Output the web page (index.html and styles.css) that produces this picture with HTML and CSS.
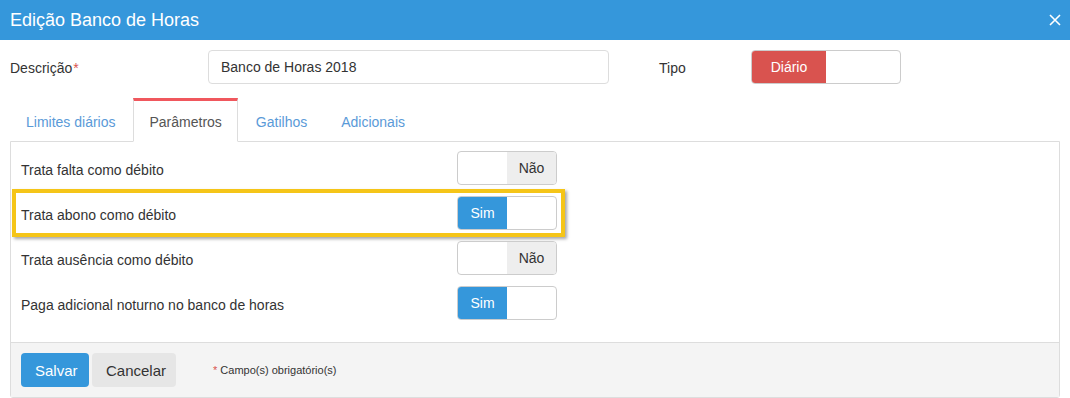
FILE: index.html
```html
<!DOCTYPE html>
<html lang="pt-BR">
<head>
  <meta charset="UTF-8">
  <title>Edição Banco de Horas</title>
  <link rel="stylesheet" href="styles.css">
</head>
<body>
  <div class="modal-header">
    <span class="modal-title">Edição Banco de Horas</span>
    <span class="close">
      <svg width="12" height="12" viewBox="0 0 12 12"><path d="M1 1L11 11M11 1L1 11" stroke="#fff" stroke-width="1.6"/></svg>
    </span>
  </div>

  <div class="form-row">
    <label class="form-label">Descrição<span class="req">*</span></label>
    <input class="form-input" type="text" value="Banco de Horas 2018">
    <label class="tipo-label">Tipo</label>
    <div class="toggle toggle-wide">
      <span class="half on-red">Diário</span>
      <span class="half"></span>
    </div>
  </div>

  <ul class="tabs">
    <li class="tab">Limites diários</li>
    <li class="tab active">Parâmetros</li>
    <li class="tab">Gatilhos</li>
    <li class="tab">Adicionais</li>
  </ul>

  <div class="pane">
    <div class="rows">
      <div class="row">
        <span class="row-label">Trata falta como débito</span>
        <div class="toggle"><span class="half"></span><span class="half off">Não</span></div>
      </div>
      <div class="row highlighted">
        <span class="mark"></span>
        <span class="row-label">Trata abono como débito</span>
        <div class="toggle"><span class="half on">Sim</span><span class="half"></span></div>
      </div>
      <div class="row">
        <span class="row-label">Trata ausência como débito</span>
        <div class="toggle"><span class="half"></span><span class="half off">Não</span></div>
      </div>
      <div class="row">
        <span class="row-label">Paga adicional noturno no banco de horas</span>
        <div class="toggle"><span class="half on">Sim</span><span class="half"></span></div>
      </div>
    </div>
    <div class="footer">
      <button class="btn btn-primary">Salvar</button>
      <button class="btn btn-default">Cancelar</button>
      <span class="note"><span class="req">*</span> Campo(s) obrigatório(s)</span>
    </div>
  </div>
</body>
</html>
```

FILE: styles.css
```css
  body {
    font-family: "Liberation Sans", Arial, sans-serif;
    background-color: #fff;
    color: #333;
    margin: 0;
    padding: 0;
    font-size: 14px;
  }
  .modal-header {
    background-color: #3597db;
    color: white;
    height: 40px;
    padding: 0 10px;
    display: flex;
    align-items: center;
    justify-content: space-between;
  }
  .modal-title {
    font-size: 18px;
  }
  .close {
    display: flex;
    margin-right: -1px;
  }
  .form-row {
    display: flex;
    align-items: center;
    padding: 9px 10px 0 10px;
  }
  .form-label {
    width: 198px;
    padding-top: 2px;
  }
  .req {
    color: #d9534f;
    margin-left: 1px;
  }
  .form-input {
    width: 401px;
    height: 34px;
    box-sizing: border-box;
    border: 1px solid #ddd;
    border-radius: 4px;
    padding: 0 12px;
    font-family: inherit;
    font-size: 14px;
    color: #333;
    margin-top: 1px;
  }
  .tipo-label {
    margin-left: 50px;
    width: 92px;
    padding-top: 2px;
  }
  .toggle {
    display: flex;
    width: 100px;
    height: 34px;
    box-sizing: border-box;
    border: 1px solid #ccc;
    border-radius: 4px;
    overflow: hidden;
  }
  .toggle-wide {
    width: 150px;
  }
  .half {
    flex: 1;
    display: flex;
    align-items: center;
    justify-content: center;
  }
  .on {
    background-color: #3597db;
    color: white;
  }
  .on-red {
    background-color: #d9534f;
    color: white;
  }
  .off {
    background-color: #eee;
    color: #333;
  }
  .tabs {
    list-style: none;
    margin: 14px 0 0 0;
    padding: 0 10px;
    display: flex;
    gap: 2px;
  }
  .tab {
    height: 44px;
    box-sizing: border-box;
    padding: 1px 15px 0 15px;
    display: flex;
    align-items: center;
    color: #5a9ad8;
    border: 1px solid transparent;
    border-top: 3px solid transparent;
    margin-bottom: -1px;
  }
  .tab.active {
    color: #555;
    background-color: #fff;
    border-color: #ddd;
    border-top-color: #f0575d;
    border-bottom-color: #fff;
    position: relative;
  }
  .pane {
    margin: 0 10px;
    border: 1px solid #ddd;
    border-bottom-left-radius: 3px;
    border-bottom-right-radius: 3px;
  }
  .rows {
    padding: 9px 10px 22px 10px;
    display: flex;
    flex-direction: column;
    gap: 11px;
  }
  .row {
    display: flex;
    align-items: center;
    position: relative;
  }
  .row-label {
    width: 436px;
    padding-top: 4px;
    position: relative;
  }
  .mark {
    position: absolute;
    left: -9px;
    top: -7px;
    width: 553px;
    height: 48px;
    box-sizing: border-box;
    border: 4px solid #f5c518;
    box-shadow: 2px 2px 3px rgba(0, 0, 0, 0.35);
  }
  .footer {
    background-color: #f4f4f4;
    border-top: 1px solid #ddd;
    padding: 10px 10px;
    display: flex;
    align-items: center;
    gap: 3px;
  }
  .btn {
    height: 34px;
    border: none;
    border-radius: 4px;
    font-family: inherit;
    font-size: 15px;
    padding: 0 14px;
    cursor: pointer;
  }
  .btn-primary {
    background-color: #3597db;
    color: white;
    width: 68px;
  }
  .btn-default {
    background-color: #e6e6e6;
    color: #333;
    width: 84px;
  }
  .note {
    margin-left: 33px;
    font-size: 11px;
    color: #333;
  }
```
